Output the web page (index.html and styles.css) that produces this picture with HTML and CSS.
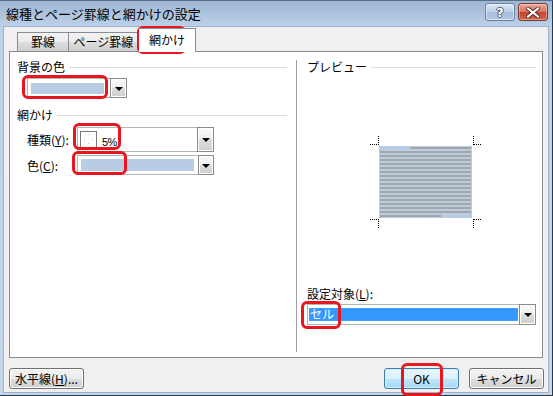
FILE: index.html
```html
<!DOCTYPE html>
<html lang="ja">
<head>
    <meta charset="UTF-8">
    <title>線種とページ罫線と網かけの設定</title>
    <link rel="stylesheet" href="styles.css">
</head>
<body>
    <div class="window">
        <div class="titlebar">
            <span class="title">線種とページ罫線と網かけの設定</span>
            <div class="caption-btns">
                <span class="cap-btn help">?</span>
                <span class="cap-btn close">
                    <svg width="14" height="11" viewBox="0 0 14 11">
                        <path d="M2 1.5 L12 9.5 M12 1.5 L2 9.5" stroke="#5a2a22" stroke-width="4" stroke-linecap="square"/>
                        <path d="M2 1.5 L12 9.5 M12 1.5 L2 9.5" stroke="#fff" stroke-width="2" stroke-linecap="square"/>
                    </svg>
                </span>
            </div>
        </div>

        <div class="client">
            <div class="tabs">
                <div class="tab tab-border">罫線</div>
                <div class="tab tab-page">ページ罫線</div>
                <div class="tab tab-shade active">網かけ</div>
            </div>

            <div class="panel">
                <!-- 左側：背景の色 / 網かけ -->
                <div class="col-left">
                    <div class="group-head"><span>背景の色</span><i></i></div>
                    <div class="combo combo-bg">
                        <div class="combo-body"><span class="fill"></span></div>
                        <span class="arrow"></span>
                    </div>

                    <div class="group-head shade-head"><span>網かけ</span><i></i></div>
                    <div class="field-row">
                        <label class="field-label">種類(<u>Y</u>):</label>
                        <div class="combo combo-pattern">
                            <div class="combo-body">
                                <svg class="swatch" width="17" height="17" viewBox="0 0 17 17">
                                    <rect x="0.5" y="0.5" width="16" height="16" fill="#fff" stroke="#7a7a7a"/>
                                    <rect x="8" y="3" width="1" height="1" fill="#c8c8e0"/>
                                    <rect x="4" y="8" width="1" height="1" fill="#c8c8e0"/>
                                    <rect x="12" y="8" width="1" height="1" fill="#c8c8e0"/>
                                    <rect x="8" y="12" width="1" height="1" fill="#c8c8e0"/>
                                </svg>
                                <span class="pct">5%</span>
                            </div>
                            <span class="arrow"></span>
                        </div>
                    </div>
                    <div class="field-row color-row">
                        <label class="field-label">色(<u>C</u>):</label>
                        <div class="combo combo-color">
                            <div class="combo-body"><span class="fill"></span></div>
                            <span class="arrow"></span>
                        </div>
                    </div>
                </div>

                <div class="divider"></div>

                <!-- 右側：プレビュー -->
                <div class="col-right">
                    <div class="group-head"><span>プレビュー</span><i></i></div>
                    <svg class="preview" width="112" height="92" viewBox="0 0 112 92">
                        <rect x="9" y="10" width="93" height="72" fill="#b8cce4"/>
                        <g fill="#a6a6a6">
                            <rect x="40" y="11" width="61" height="2"/>
                            <rect x="10" y="15" width="91" height="2"/>
                            <rect x="10" y="19" width="91" height="2"/>
                            <rect x="10" y="23" width="91" height="2"/>
                            <rect x="10" y="27" width="91" height="2"/>
                            <rect x="10" y="31" width="91" height="2"/>
                            <rect x="10" y="35" width="91" height="2"/>
                            <rect x="10" y="39" width="91" height="2"/>
                            <rect x="10" y="43" width="91" height="2"/>
                            <rect x="10" y="47" width="91" height="2"/>
                            <rect x="10" y="51" width="91" height="2"/>
                            <rect x="10" y="55" width="91" height="2"/>
                            <rect x="10" y="59" width="91" height="2"/>
                            <rect x="10" y="63" width="91" height="2"/>
                            <rect x="10" y="67" width="91" height="2"/>
                            <rect x="10" y="71" width="91" height="2"/>
                            <rect x="10" y="75" width="91" height="2"/>
                            <rect x="10" y="79" width="61" height="2"/>
                        </g>
                        <g stroke="#000" stroke-width="1" stroke-dasharray="1 1" fill="none">
                            <path d="M8.5 0 V9 M0 8.5 H8"/>
                            <path d="M103.5 0 V9 M104 8.5 H112"/>
                            <path d="M8.5 83 V92 M0 83.5 H8"/>
                            <path d="M103.5 83 V92 M104 83.5 H112"/>
                        </g>
                    </svg>
                    <label class="apply-label">設定対象(<u>L</u>):</label>
                    <div class="combo combo-apply">
                        <div class="combo-body"><span class="selected">セル</span></div>
                        <span class="arrow"></span>
                    </div>
                </div>
            </div>

            <div class="footer">
                <button type="button" class="btn">水平線(<u>H</u>)...</button>
                <button type="button" class="btn btn-default">OK</button>
                <button type="button" class="btn">キャンセル</button>
            </div>
        </div>

        <!-- 赤枠の注記 -->
        <span class="mark mark-tab"></span>
        <span class="mark mark-bg"></span>
        <span class="mark mark-pattern"></span>
        <span class="mark mark-color"></span>
        <span class="mark mark-apply"></span>
        <span class="mark mark-ok"></span>
    </div>
</body>
</html>
```

FILE: styles.css
```css
* {
    box-sizing: border-box;
}
body {
    margin: 0;
    font-family: "Noto Sans CJK JP", "Liberation Sans", sans-serif;
    font-size: 12px;
    color: #000;
}
.window {
    position: relative;
    width: 553px;
    height: 396px;
    border-top: 1px solid #5d6f86;
    border-right: 1px solid #2c3846;
    border-bottom: 1px solid #2c3846;
    padding: 0 3px 2px 3px;
    background: linear-gradient(#9db6d4, #bdd1e8 26px, #c3d6ea);
    display: flex;
    flex-direction: column;
}
.titlebar {
    height: 25px;
    display: flex;
    align-items: flex-start;
}
.title {
    padding-left: 3px;
    font-size: 13px;
    line-height: 25px;
    color: #000;
}
.caption-btns {
    margin-left: auto;
    margin-top: 2px;
    margin-right: 1px;
    display: flex;
    gap: 3px;
}
.cap-btn {
    width: 30px;
    height: 18px;
    border-radius: 3px;
    display: flex;
    align-items: center;
    justify-content: center;
}
.help {
    border: 1px solid #6a819f;
    background: linear-gradient(#dbe6f3, #bccfe6 50%, #a6bedc 50%, #b4cae4);
    box-shadow: inset 0 0 0 1px rgba(255, 255, 255, 0.5);
    color: #fff;
    font-family: "DejaVu Sans", sans-serif;
    font-weight: bold;
    font-size: 13px;
    text-shadow: 1px 0 #4a5c74, -1px 0 #4a5c74, 0 1px #4a5c74, 0 -1px #4a5c74;
}
.close {
    border: 1px solid #7a3a30;
    background: linear-gradient(#e9a99a, #d4735d 50%, #c2452c 50%, #d0654c);
    box-shadow: inset 0 0 0 1px rgba(255, 255, 255, 0.35);
}
.client {
    flex: 1;
    background: #f0f0f0;
    border: 1px solid #9fb1c8;
    padding: 0 5px;
}
.tabs {
    height: 23px;
    margin-top: 1px;
    padding-left: 8px;
    display: flex;
    align-items: flex-end;
}
.tab {
    height: 19px;
    border: 1px solid #898c95;
    border-bottom: none;
    background: linear-gradient(#f3f3f3, #ebebeb 50%, #dddddd 50%, #cfcfcf);
    text-align: center;
    line-height: 18px;
}
.tab-border {
    width: 51px;
    border-right: none;
}
.tab-page {
    width: 71px;
}
.tab-shade {
    width: 57px;
}
.tab.active {
    position: relative;
    z-index: 1;
    height: 24px;
    margin-bottom: -1px;
    background: #fff;
    line-height: 22px;
    border-left: none;
}
.panel {
    height: 307px;
    border: 1px solid #898c95;
    background: #fff;
    display: flex;
    align-items: flex-start;
}
.col-left {
    width: 277px;
    padding: 8px 0 0 7px;
}
.divider {
    width: 1px;
    height: 292px;
    margin: 8px 0 0 9px;
    background: #a0a0a0;
}
.col-right {
    width: 229px;
    margin-left: 10px;
    padding-top: 8px;
}
.group-head {
    height: 14px;
    line-height: 14px;
    display: flex;
    align-items: center;
}
.group-head i {
    flex: 1;
    height: 1px;
    margin-left: 4px;
    background: #d5dfe5;
}
.shade-head {
    margin-top: 10px;
}
.combo {
    display: flex;
    border: 1px solid #b5b5b5;
    background: #fff;
}
.combo-body {
    flex: 1;
    display: flex;
    align-items: center;
}
.arrow {
    width: 17px;
    margin: -1px -1px -1px 0;
    border: 1px solid #8a8a8a;
    background: linear-gradient(#fbfbfb, #ececec 50%, #dcdcdc 50%, #cfcfcf);
    box-shadow: inset 0 0 0 1px #fff;
    display: flex;
    align-items: center;
    justify-content: center;
}
.arrow::after {
    content: "";
    border-left: 4px solid transparent;
    border-right: 4px solid transparent;
    border-top: 4px solid #000;
    margin-top: 1px;
}
.fill {
    display: block;
    background: #b8cce4;
}
.combo-bg {
    width: 100px;
    height: 20px;
    margin: 4px 0 0 10px;
}
.combo-bg .combo-body {
    padding: 3px 5px 3px 3px;
}
.combo-bg .fill {
    width: 73px;
    height: 11px;
}
.field-row {
    margin: 5px 0 0 10px;
    display: flex;
    align-items: center;
}
.color-row {
    margin-top: 3px;
}
.field-label {
    width: 50px;
}
.combo-pattern {
    width: 137px;
    height: 25px;
}
.combo-pattern .combo-body {
    padding: 3px 2px;
}
.swatch {
    display: block;
}
.pct {
    margin-left: 5px;
    padding-top: 4px;
    font-family: "Liberation Sans", sans-serif;
    font-size: 11px;
    letter-spacing: -0.5px;
    line-height: 14px;
}
.combo-color {
    width: 137px;
    height: 20px;
}
.combo-color .combo-body {
    padding: 2px 4px 2px 3px;
}
.combo-color .fill {
    width: 113px;
    height: 12px;
}
.preview {
    display: block;
    margin: 62px 0 0 63px;
}
.apply-label {
    display: block;
    height: 14px;
    line-height: 14px;
    margin-top: 59px;
}
.combo-apply {
    width: 229px;
    height: 21px;
    margin-top: 3px;
}
.combo-apply .combo-body {
    padding: 2px 0 2px 1px;
}
.selected {
    display: block;
    width: 209px;
    height: 13px;
    line-height: 12px;
    padding-left: 1px;
    background: #3399ff;
    color: #fff;
    outline: 1px dotted #d08a3a;
    outline-offset: -1px;
}
.footer {
    margin-top: 10px;
    margin-right: -1px;
    display: flex;
}
.btn {
    width: 75px;
    height: 21px;
    padding: 0;
    border: 1px solid #707070;
    border-radius: 3px;
    background: linear-gradient(#f2f2f2, #ebebeb 50%, #dddddd 50%, #cfcfcf);
    box-shadow: inset 0 0 0 1px #fcfcfc;
    font-family: "Noto Sans CJK JP", "Liberation Sans", sans-serif;
    font-size: 12px;
    line-height: 18px;
    color: #000;
}
.btn-default {
    margin-left: auto;
    border-color: #3c7fb1;
    background: linear-gradient(#eaf6fd, #d9f0fc 50%, #bee6fd 50%, #a7d9f5);
    box-shadow: inset 0 0 0 1px #d2f0fd;
}
.btn + .btn:last-child {
    margin-left: 10px;
}
.mark {
    position: absolute;
    border: 3px solid #e8161f;
    border-radius: 6px;
}
.mark-tab {
    left: 137px;
    top: 25px;
    width: 49px;
    height: 28px;
}
.mark-bg {
    left: 22px;
    top: 74px;
    width: 86px;
    height: 24px;
}
.mark-pattern {
    left: 73px;
    top: 122px;
    width: 48px;
    height: 27px;
}
.mark-color {
    left: 72px;
    top: 150px;
    width: 55px;
    height: 24px;
}
.mark-apply {
    left: 301px;
    top: 300px;
    width: 40px;
    height: 28px;
}
.mark-ok {
    left: 401px;
    top: 362px;
    width: 42px;
    height: 33px;
}
```
